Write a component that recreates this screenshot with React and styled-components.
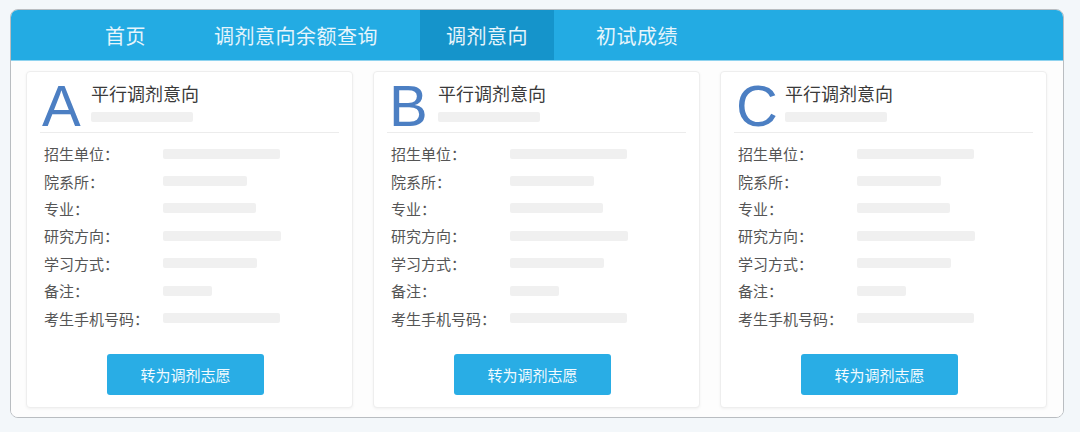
import React from "react";
import styled, { createGlobalStyle } from "styled-components";

const GlobalStyle = createGlobalStyle`
  html, body {
    margin: 0;
    padding: 0;
    background: #f3f7fa;
    font-family: "Noto Sans CJK SC", "Liberation Sans", sans-serif;
  }
`;

const Page = styled.div`
  width: 1080px;
  height: 432px;
  padding: 9px 16px 0 10px;
  box-sizing: border-box;
`;

const Panel = styled.div`
  background: #ffffff;
  border: 1px solid #b9bdc1;
  border-radius: 8px;
  overflow: hidden;
  height: 409px;
  box-sizing: border-box;
  display: flex;
  flex-direction: column;
`;

const NavBar = styled.div`
  display: flex;
  align-items: stretch;
  gap: 16px;
  height: 50px;
  padding-left: 68px;
  background: #23abe3;
  border-bottom: 1px solid #8fd3ef;
`;

const Tab = styled.div`
  display: flex;
  align-items: center;
  padding: 0 26px;
  font-size: 20px;
  color: #e6f5fc;
  background: ${(p) => (p.active ? "#1594cb" : "transparent")};
  letter-spacing: 0.5px;
`;

const Cards = styled.div`
  flex: 1;
  display: grid;
  grid-template-columns: repeat(3, 1fr);
  gap: 20px;
  padding: 10px 16px 9px 15px;
  background: #fdfdfd;
`;

const Card = styled.div`
  background: #ffffff;
  border: 1px solid #eeeeee;
  border-radius: 4px;
  box-shadow: 0 1px 3px rgba(0, 0, 0, 0.05);
  padding: 0 13px 12px;
  display: flex;
  flex-direction: column;
`;

const Header = styled.div`
  display: flex;
  align-items: flex-start;
  gap: 5px;
  height: 61px;
  padding: 5px 0 0 2px;
  box-sizing: border-box;
  border-bottom: 1px solid #ececec;
`;

const Letter = styled.div`
  font-family: "Liberation Sans", Arial, sans-serif;
  font-size: 58px;
  line-height: 58px;
  color: #4c7fc3;
  width: 44px;
`;

const TitleBlock = styled.div`
  display: flex;
  flex-direction: column;
  gap: 7px;
  padding-top: 5px;
`;

const Title = styled.div`
  font-size: 18px;
  line-height: 23px;
  color: #3a3a3a;
`;

const Bar = styled.div`
  height: 10px;
  background: #f0f0f0;
  border-radius: 2px;
  filter: blur(0.6px);
`;

const Rows = styled.div`
  padding: 7px 0 0 4px;
`;

const Row = styled.div`
  display: flex;
  align-items: center;
  height: 27.4px;
`;

const Label = styled.div`
  width: 119px;
  font-size: 15px;
  color: #555555;
`;

const ButtonWrap = styled.div`
  display: flex;
  justify-content: center;
  margin-top: auto;
  padding-right: 8px;
`;

const Button = styled.button`
  width: 157px;
  height: 41px;
  border: none;
  border-radius: 3px;
  background: #29ade5;
  color: #f2fbff;
  font-family: "Noto Sans CJK SC", "Liberation Sans", sans-serif;
  font-size: 15px;
  cursor: pointer;
`;

const tabs = ["首页", "调剂意向余额查询", "调剂意向", "初试成绩"];

const fields = [
  ["招生单位：", 117],
  ["院系所：", 84],
  ["专业：", 93],
  ["研究方向：", 118],
  ["学习方式：", 94],
  ["备注：", 49],
  ["考生手机号码：", 117],
];

export default function App() {
  return (
    <>
      <GlobalStyle />
      <Page>
        <Panel>
          <NavBar>
            {tabs.map((t) => (
              <Tab key={t} active={t === "调剂意向"}>
                {t}
              </Tab>
            ))}
          </NavBar>
          <Cards>
            {["A", "B", "C"].map((l) => (
              <Card key={l}>
                <Header>
                  <Letter>{l}</Letter>
                  <TitleBlock>
                    <Title>平行调剂意向</Title>
                    <Bar style={{ width: 102 }} />
                  </TitleBlock>
                </Header>
                <Rows>
                  {fields.map(([label, w]) => (
                    <Row key={label}>
                      <Label>{label}</Label>
                      <Bar style={{ width: w }} />
                    </Row>
                  ))}
                </Rows>
                <ButtonWrap>
                  <Button>转为调剂志愿</Button>
                </ButtonWrap>
              </Card>
            ))}
          </Cards>
        </Panel>
      </Page>
    </>
  );
}
